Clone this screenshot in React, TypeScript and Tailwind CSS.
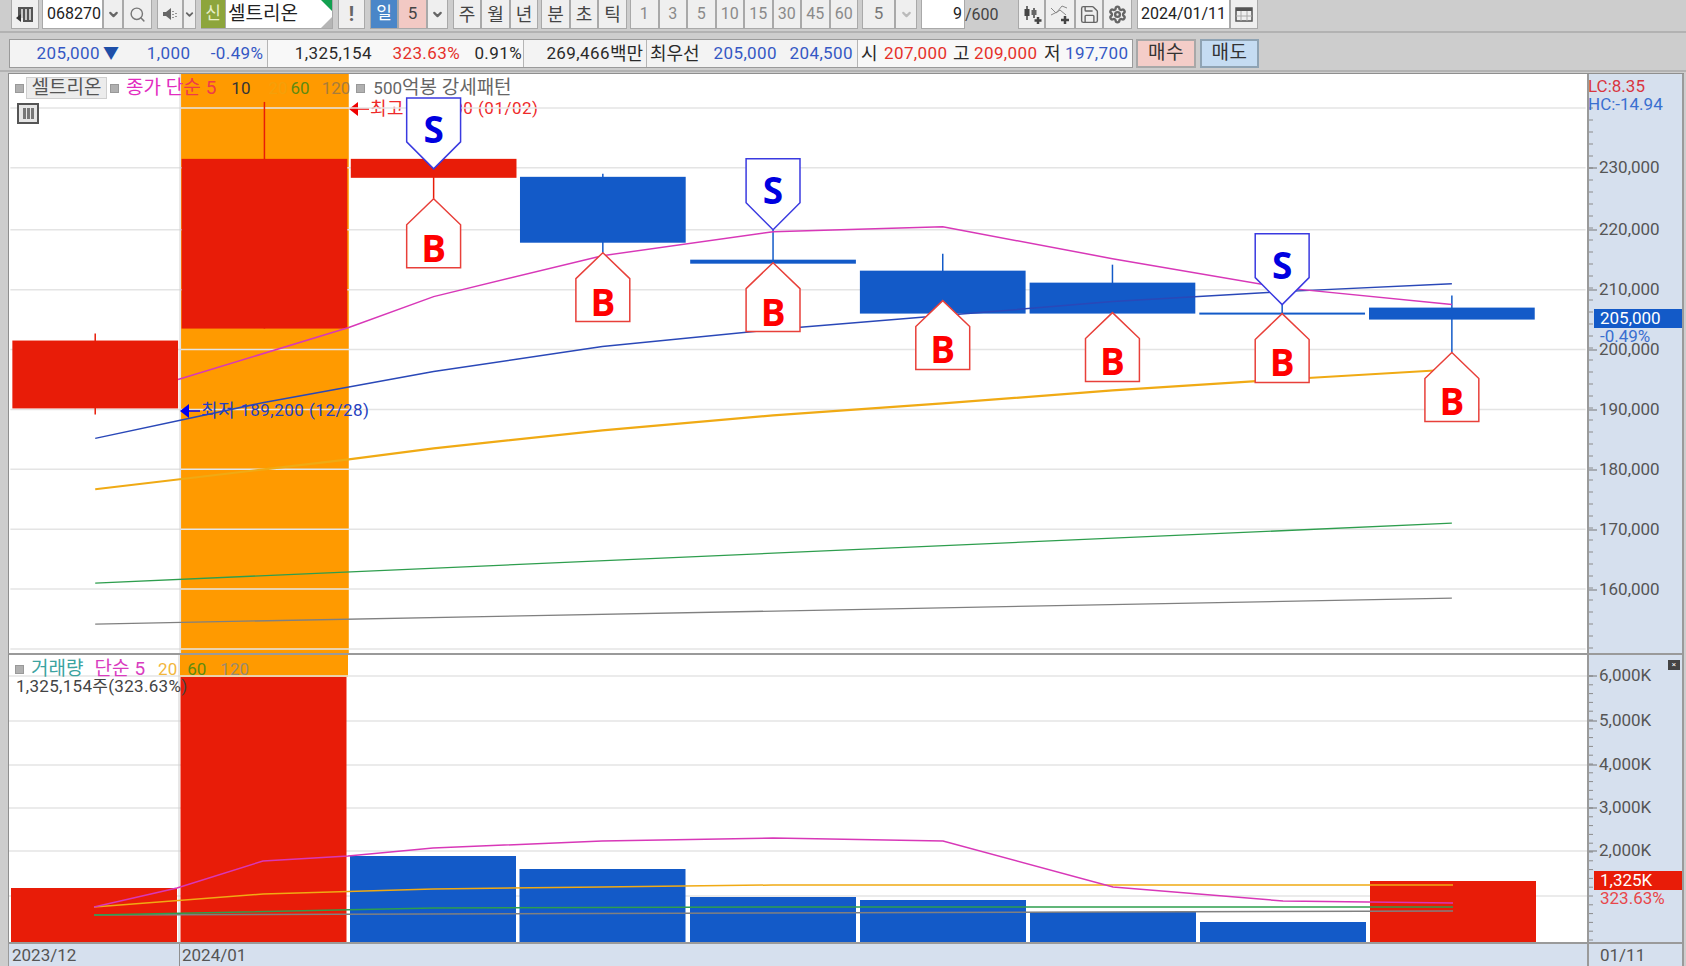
// Stock chart window: toolbar rows, price pane, volume pane
import React from 'react';
import { Search, Settings, Save, ChevronDown } from 'lucide-react';

const fontCls = "font-['Roboto','Noto_Sans_CJK_KR',sans-serif]";

const centers = [94, 263.5, 433, 602.5, 773, 943, 1113, 1283, 1453];
const RED = '#e81c08';
const BLUE = '#135ac8';

const candles = [
  { c: 0, top: 341, bot: 409, hi: 334, lo: 415, color: RED },
  { c: 1, top: 159, bot: 329, hi: 102, lo: 329, color: RED },
  { c: 2, top: 159, bot: 178, hi: 159, lo: 199, color: RED },
  { c: 3, top: 177, bot: 243, hi: 174, lo: 253, color: BLUE },
  { c: 4, top: 260, bot: 264, hi: 230, lo: 264, color: BLUE },
  { c: 5, top: 271, bot: 314, hi: 254, lo: 301, color: BLUE },
  { c: 6, top: 283, bot: 314, hi: 265, lo: 314, color: BLUE },
  { c: 7, top: 313, bot: 315, hi: 305, lo: 315, color: BLUE },
  { c: 8, top: 308, bot: 320, hi: 296, lo: 353, color: BLUE },
];

const volumes = [
  { c: 0, top: 889, color: RED },
  { c: 1, top: 678, color: RED },
  { c: 2, top: 857, color: BLUE },
  { c: 3, top: 870, color: BLUE },
  { c: 4, top: 898, color: BLUE },
  { c: 5, top: 901, color: BLUE },
  { c: 6, top: 913, color: BLUE },
  { c: 7, top: 923, color: BLUE },
  { c: 8, top: 882, color: RED },
];

const sellMarks = [{ c: 2, top: 98 }, { c: 4, top: 159 }, { c: 7, top: 234 }];
const buyMarks = [
  { c: 2, tip: 199 },
  { c: 3, tip: 253 },
  { c: 4, tip: 263 },
  { c: 5, tip: 301 },
  { c: 6, tip: 313 },
  { c: 7, tip: 314 },
  { c: 8, tip: 353 },
];

const priceGrid = [
  { y: 108 },
  { y: 168, label: '230,000' },
  { y: 230, label: '220,000' },
  { y: 290, label: '210,000' },
  { y: 350, label: '200,000' },
  { y: 410, label: '190,000' },
  { y: 470, label: '180,000' },
  { y: 530, label: '170,000' },
  { y: 590, label: '160,000' },
  { y: 650 },
];

const volumeGrid = [
  { y: 677, label: '6,000K' },
  { y: 722, label: '5,000K' },
  { y: 766, label: '4,000K' },
  { y: 809, label: '3,000K' },
  { y: 852, label: '2,000K' },
  { y: 897 },
];

const Mark = ({ cls = '' }: { cls?: string }) => (
  <span className={`inline-block w-[9px] h-[9px] shrink-0 bg-[#b0b0b0] border border-[#d8d8d8] outline outline-1 outline-[#999] -outline-offset-1 ${cls}`} />
);

function Btn({ children, w, cls = '' }: { children?: React.ReactNode; w: string; cls?: string }) {
  return (
    <div className={`${w} h-[29px] flex items-center justify-center border border-t-0 border-[#a9a9a9] bg-[#efefef] text-[#444] text-[17px] ${cls}`}>
      {children}
    </div>
  );
}

function Caret() {
  return <ChevronDown size={13} strokeWidth={4} className="text-[#666]" />;
}

function Arrow({ color }: { color: string }) {
  return (
    <svg width="20" height="16" viewBox="0 0 20 16" className="shrink-0">
      <path d="M0 8L9 1v14z" fill={color} />
      <path d="M8 8h12" stroke={color} strokeWidth="1.5" />
    </svg>
  );
}

function TopBar() {
  const periods = ['1', '3', '5', '10', '15', '30', '45', '60'];
  return (
    <div className="h-[33px] flex items-start pl-[11px] border-b-2 border-[#b2b2b2]">
      <Btn w="w-[28px]">
        <svg width="20" height="20" viewBox="0 0 20 20">
          <path d="M3 3h15v15H8v-4H3z" fill="#555" />
          <path d="M7 5v11M11 5v11M15 5v11" stroke="#eee" strokeWidth="1.5" />
          <path d="M1 14l5-4v8z" fill="#333" />
        </svg>
      </Btn>
      <div className="w-[61px] h-[29px] ml-[3px] bg-white border border-t-0 border-[#a9a9a9] flex items-center pl-[4px] text-[16px] text-[#222]">068270</div>
      <Btn w="w-[20px]"><Caret /></Btn>
      <Btn w="w-[29px]"><Search size={17} className="text-[#777]" /></Btn>
      <Btn w="w-[26px]" cls="ml-[5px]">
        <svg width="18" height="18" viewBox="0 0 18 18">
          <path d="M2 7h3l5-4v12l-5-4H2z" fill="#666" />
          <path d="M12 6v1M12 9v1M12 12v1M15 8v1M15 11v1" stroke="#777" strokeWidth="1.5" />
        </svg>
      </Btn>
      <Btn w="w-[13px]"><ChevronDown size={11} strokeWidth={4} className="text-[#666]" /></Btn>
      <div className="w-[24px] h-[29px] ml-[5px] bg-[#8da53c] text-[#e9f0c8] text-[17px] flex items-center justify-center border-b border-[#a9a9a9]">신</div>
      <div className="relative w-[108px] h-[29px] bg-white border border-t-0 border-[#a9a9a9] flex items-center pl-[2px] text-[19px] text-[#222]">
        셀트리온
        <span className="absolute right-0 top-0 w-0 h-0 border-l-[11px] border-l-transparent border-t-[11px] border-t-[#12a050]" />
        <span className="absolute right-0 bottom-0 w-0 h-0 border-l-[11px] border-l-transparent border-b-[11px] border-b-[#b5b5b5]" />
      </div>
      <Btn w="w-[27px]" cls="ml-[5px] font-bold !text-[#666] !text-[20px]">!</Btn>
      <Btn w="w-[28px]" cls="ml-[5px] !bg-[#4a86c8] !text-white">일</Btn>
      <Btn w="w-[29px]" cls="!bg-[#f2c9c4]">5</Btn>
      <Btn w="w-[21px]"><Caret /></Btn>
      <Btn w="w-[28px]" cls="ml-[5px] !text-[18px]">주</Btn>
      <Btn w="w-[29px]" cls="!text-[18px]">월</Btn>
      <Btn w="w-[28px]" cls="!text-[18px]">년</Btn>
      <Btn w="w-[29px]" cls="ml-[3px] !text-[18px]">분</Btn>
      <Btn w="w-[28px]" cls="!text-[18px]">초</Btn>
      <Btn w="w-[29px]" cls="!text-[18px]">틱</Btn>
      <div className="flex ml-[3px]">
        {periods.map(p => (
          <Btn key={p} w="w-[28.5px]" cls="!text-[#8a8a8a] !text-[16px]">{p}</Btn>
        ))}
      </div>
      <Btn w="w-[33px]" cls="ml-[4px] !text-[#777]">5</Btn>
      <Btn w="w-[22px]"><ChevronDown size={13} strokeWidth={4} className="text-[#bbb]" /></Btn>
      <div className="w-[44px] h-[29px] ml-[4px] bg-white border border-t-0 border-[#a9a9a9] flex items-center justify-end pr-[2px] text-[16px] text-[#222]">9</div>
      <div className="w-[53px] h-[29px] flex items-center text-[16px] text-[#444]">/600</div>
      <Btn w="w-[27px]">
        <svg width="22" height="22" viewBox="0 0 22 22">
          <path d="M6 3v14M13 5v10" stroke="#444" strokeWidth="1.5" />
          <rect x="3.5" y="6" width="5" height="7" fill="#444" />
          <rect x="10.5" y="7" width="5" height="5" fill="#666" />
          <path d="M17 14v7M13.5 17.5h7" stroke="#444" strokeWidth="2.5" />
        </svg>
      </Btn>
      <Btn w="w-[30px]">
        <svg width="22" height="22" viewBox="0 0 22 22">
          <path d="M2 5l5 5 4-3 6 5M2 12l6-3 5-6 5 2" stroke="#888" strokeWidth="1" fill="none" />
          <path d="M16 13v8M12 17h8" stroke="#444" strokeWidth="2.5" />
        </svg>
      </Btn>
      <Btn w="w-[28px]"><Save size={21} strokeWidth={1.6} className="text-[#666]" /></Btn>
      <Btn w="w-[29px]"><Settings size={19} strokeWidth={3} className="text-[#666]" /></Btn>
      <div className="w-[93px] h-[29px] ml-[5px] bg-white border border-t-0 border-[#a9a9a9] flex items-center justify-center text-[16px] text-[#222]">2024/01/11</div>
      <Btn w="w-[28px]">
        <svg width="18" height="16" viewBox="0 0 18 16">
          <rect x="1" y="2" width="16" height="13" fill="none" stroke="#555" strokeWidth="1.5" />
          <rect x="1" y="2" width="16" height="3" fill="#555" />
          <path d="M6 5v10M12 5v10M1 10h16" stroke="#aaa" strokeWidth="1" />
        </svg>
      </Btn>
    </div>
  );
}

function InfoBar() {
  const blue = 'text-[#3558c4]';
  const red = 'text-[#e5302a]';
  return (
    <div className="h-[39px] pt-[6px] flex items-start border-b-2 border-[#b2b2b2] text-[17px] tracking-[0.4px] text-[#2a2a2a] whitespace-nowrap">
      <div className="ml-[9px] w-[1124px] h-[29px] flex border border-[#9a9a9a] bg-[#f3f3f3]">
        <div className="w-[258px] flex items-center border-r border-[#b5b5b5]">
          <span className={`w-[90px] text-right ${blue}`}>205,000</span>
          <span className="ml-[3px] text-[#1e4fa8] text-[16px]">▼</span>
          <span className={`w-[71px] text-right ${blue}`}>1,000</span>
          <span className={`w-[73px] text-right ${blue}`}>-0.49%</span>
        </div>
        <div className="w-[256px] flex items-center border-r border-[#b5b5b5] bg-[#f8f8f8]">
          <span className="w-[104px] text-right">1,325,154</span>
          <span className={`w-[88px] text-right ${red}`}>323.63%</span>
          <span className="w-[62px] text-right">0.91%</span>
        </div>
        <div className="w-[123px] flex items-center justify-end pr-[3px] border-r border-[#b5b5b5]">269,466<span className="text-[18px] tracking-normal">백만</span></div>
        <div className="w-[211px] flex items-center border-r border-[#b5b5b5]">
          <span className="ml-[3px] w-[54px] text-[18px] tracking-normal">최우선</span>
          <span className={`w-[73px] text-right ${blue}`}>205,000</span>
          <span className={`w-[76px] text-right ${blue}`}>204,500</span>
        </div>
        <div className="flex-1 flex items-center bg-[#f8f8f8] pl-[3px]">
          <span className="w-[23px] text-[18px]">시</span>
          <span className={`w-[66px] ${red}`}>207,000</span>
          <span className="w-[24px] pl-[3px] text-[18px]">고</span>
          <span className={`w-[67px] ${red}`}>209,000</span>
          <span className="w-[24px] pl-[3px] text-[18px]">저</span>
          <span className={blue}>197,700</span>
        </div>
      </div>
      <div className="ml-[3px] w-[60px] h-[29px] flex items-center justify-center bg-[#f4cdc8] border-2 border-[#a8a8a8] text-[#333] text-[19px]">매수</div>
      <div className="ml-[4px] w-[59px] h-[29px] flex items-center justify-center bg-[#c5dcf2] border-2 border-[#8fa3b3] text-[#333] text-[19px]">매도</div>
    </div>
  );
}

function polyline(points: [number, number][]) {
  return points.map(p => p.join(',')).join(' ');
}

const x = centers;

function PricePlot() {
  return (
    <svg className="relative block w-full h-full" viewBox="9 74 1578 580">
      <rect x="180" y="74" width="168" height="580" fill="#ff9a00" />
      {priceGrid.map(g => (
        <line key={g.y} x1="9" x2="1587" y1={g.y} y2={g.y} stroke="#e4e4e4" strokeWidth="1.5" />
      ))}
      <line x1="179" x2="179" y1="74" y2="654" stroke="#cfcfcf" />
      {candles.map(k => (
        <g key={k.c}>
          <line x1={x[k.c]} x2={x[k.c]} y1={k.hi} y2={k.lo} stroke={k.color} strokeWidth="1.5" />
          <rect x={x[k.c] - 83} y={k.top} width="166" height={k.bot - k.top} fill={k.color} />
        </g>
      ))}
      <polyline points={polyline([[94, 625], [1453, 599]])} fill="none" stroke="#808080" strokeWidth="1.3" />
      <polyline points={polyline([[94, 584], [1453, 524]])} fill="none" stroke="#2e9e4e" strokeWidth="1.3" />
      <polyline points={polyline([[94, 490], [263, 470], [348, 460], [433, 449], [602, 431], [773, 416], [943, 404], [1113, 391], [1283, 380], [1453, 370]])} fill="none" stroke="#f0aa14" strokeWidth="2.2" />
      <polyline points={polyline([[94, 439], [263, 403], [433, 372], [602, 347], [773, 330], [943, 316], [1113, 302], [1283, 292], [1453, 284]])} fill="none" stroke="#2a48b8" strokeWidth="1.5" />
      <polyline points={polyline([[177, 380], [348, 328], [433, 297], [602, 256], [773, 232], [943, 227], [1113, 259], [1283, 288], [1453, 305]])} fill="none" stroke="#d838b8" strokeWidth="1.5" />
      {sellMarks.map(m => {
        const cx = x[m.c];
        return (
          <g key={m.c}>
            <polygon
              points={polyline([[cx - 27, m.top], [cx + 27, m.top], [cx + 27, m.top + 44], [cx, m.top + 71], [cx - 27, m.top + 44]])}
              fill="#fff"
              stroke="#3a3ae0"
              strokeWidth="1.5"
            />
            <text x={cx} y={m.top + 45} textAnchor="middle" className="font-['Open_Sans',sans-serif] font-bold text-[37px]" fill="#0000e0">S</text>
          </g>
        );
      })}
      {buyMarks.map(m => {
        const cx = x[m.c];
        return (
          <g key={m.c}>
            <polygon
              points={polyline([[cx, m.tip], [cx + 27, m.tip + 26], [cx + 27, m.tip + 69], [cx - 27, m.tip + 69], [cx - 27, m.tip + 26]])}
              fill="#fff"
              stroke="#e8403a"
              strokeWidth="1.5"
            />
            <text x={cx} y={m.tip + 63} textAnchor="middle" className="font-['Open_Sans',sans-serif] font-bold text-[37px]" fill="#ff0000">B</text>
          </g>
        );
      })}
    </svg>
  );
}

function VolumePlot() {
  return (
    <svg className="block w-full h-full" viewBox="9 656 1578 287">
      <rect x="180" y="654" width="168" height="24" fill="#ff9a00" />
      {volumeGrid.map(g => (
        <line key={g.y} x1="9" x2="1587" y1={g.y} y2={g.y} stroke="#e4e4e4" strokeWidth="1.5" />
      ))}
      <line x1="179" x2="179" y1="654" y2="943" stroke="#cfcfcf" />
      {volumes.map(v => (
        <rect key={v.c} x={x[v.c] - 83} y={v.top} width="166" height={943 - v.top} fill={v.color} />
      ))}
      <polyline points={polyline([[94, 916], [1453, 912]])} fill="none" stroke="#808080" strokeWidth="1.5" />
      <polyline points={polyline([[94, 916], [433, 909], [773, 908], [1453, 908]])} fill="none" stroke="#2e9e4e" strokeWidth="1.5" />
      <polyline points={polyline([[94, 908], [263, 895], [433, 890], [602, 888], [773, 886], [1453, 886]])} fill="none" stroke="#f0aa14" strokeWidth="1.5" />
      <polyline points={polyline([[94, 908], [177, 889], [263, 862], [348, 857], [433, 849], [602, 842], [773, 839], [943, 842], [1113, 888], [1283, 902], [1453, 904]])} fill="none" stroke="#d838b8" strokeWidth="1.5" />
    </svg>
  );
}

function Axis({ top, height, grid, step, first }: { top: number; height: number; grid: { y: number; label?: string }[]; step: number; first: number }) {
  const ticks: number[] = [];
  for (let y = first; y < top + height; y += step) ticks.push(y);
  return (
    <svg className="absolute inset-0 w-full h-full" viewBox={`1588 ${top} 93 ${height}`}>
      {ticks.map(y => (
        <line key={y} x1="1588" x2="1592" y1={y} y2={y} stroke="#8c8c8c" />
      ))}
      {grid.filter(g => g.label).map(g => (
        <g key={g.y}>
          <line x1="1588" x2="1596" y1={g.y} y2={g.y} stroke="#777" />
          <text x="1598" y={g.y + 5} className="text-[17px]" fill="#555">{g.label}</text>
        </g>
      ))}
    </svg>
  );
}

export default function App() {
  return (
    <div className={`w-[1686px] h-[966px] overflow-hidden flex flex-col bg-[#cdcdcd] ${fontCls}`}>
      <TopBar />
      <InfoBar />

      <div className="ml-[8px] mr-[2px] flex-1 flex flex-col border-t border-[#8f8f8f] min-h-0 mt-[1px]">
        {/* Price pane */}
        <div className="h-[579px] flex border-l border-[#8f8f8f]">
          <div className="relative flex-1 bg-white overflow-hidden">
            <div className="absolute left-[340px] top-[21px] flex items-center text-[17px] text-[#ee2a2a] whitespace-nowrap tracking-[0.5px]">
              <Arrow color="#f00000" />
              <span className="ml-[1px] text-[18px]">최고</span>
              <span className="ml-[5px]">241,000 (01/02)</span>
            </div>
            <PricePlot />
            <div className="absolute left-[6px] top-[0px] flex items-center text-[17px] whitespace-nowrap">
              <Mark />
              <span className="ml-[2px] w-[81px] h-[22px] flex items-center justify-center bg-[#ececec] border border-[#cfcfcf] text-[#555] text-[19px]">셀트리온</span>
              <Mark cls="ml-[3px]" />
              <span className="ml-[7px] text-[#e22cc0] text-[19px]">종가 단</span>
              <span className="text-[#ee3a4a] text-[19px]">순</span>
              <span className="ml-[5px] text-[#ee3a4a] text-[19px]">5</span>
              <span className="ml-[15px] text-[#353535]">10</span>
              <span className="ml-[18px] text-[#f5a00a]">20</span>
              <span className="ml-[3px] text-[#5f8a10]">60</span>
              <span className="ml-[12px] text-[#a87c3c]">120</span>
              <Mark cls="ml-[6px]" />
              <span className="ml-[8px] text-[#666]">500</span>
              <span className="text-[#666] text-[19px]">억봉 강세패턴</span>
            </div>
            <div className="absolute left-[8px] top-[29px] w-[22px] h-[21px] bg-[#e6e6e6] border-2 border-[#555] flex gap-[1px] justify-center pt-[3px]">
              <span className="w-[3px] h-[11px] bg-[#777]" />
              <span className="w-[3px] h-[11px] bg-[#777]" />
              <span className="w-[3px] h-[11px] bg-[#777]" />
            </div>
            <div className="absolute left-[171px] top-[323px] flex items-center text-[17px] text-[#2540c0] whitespace-nowrap tracking-[0.5px]">
              <Arrow color="#0000f0" />
              <span className="ml-[1px] text-[18px]">최저</span>
              <span className="ml-[5px]">189,200 (12/28)</span>
            </div>
          </div>
          <div className="relative w-[97px] bg-[#d6e0ee] border-x-2 border-[#9a9a9a] overflow-hidden">
            <Axis top={74} height={579} grid={priceGrid} step={12} first={108} />
            <div className="absolute left-[-1px] top-[3px] text-[#d9363e] text-[17px] leading-[18px]">LC:8.35</div>
            <div className="absolute left-[-1px] top-[21px] text-[#3a6fd0] text-[17px] leading-[18px]">HC:-14.94</div>
            <div className="absolute left-[5px] top-[235px] w-[88px] h-[19px] bg-[#135ac8] text-white text-[17px] leading-[19px] pl-[6px]">205,000</div>
            <div className="absolute left-[5px] top-[254px] w-[88px] h-[15px] bg-[#d6e0ee] text-[#3a6fd0] text-[17px] leading-[17px] pl-[6px]">-0.49%</div>
          </div>
        </div>

        {/* Volume pane */}
        <div className="h-[289px] flex border-l border-[#8f8f8f] border-t-2 border-t-[#9a9a9a]">
          <div className="relative flex-1 bg-white overflow-hidden">
            <VolumePlot />
            <div className="absolute left-[6px] top-[0px] flex items-center text-[17px] whitespace-nowrap">
              <Mark />
              <span className="ml-[7px] text-[#3ba3a0] text-[19px]">거래량</span>
              <span className="ml-[11px] text-[#d93cc0] text-[19px]">단순</span>
              <span className="ml-[5px] text-[#d93cc0] text-[19px]">5</span>
              <span className="ml-[13px] text-[#f2b63c]">20</span>
              <span className="ml-[10px] text-[#5f8a10]">60</span>
              <span className="ml-[14px] text-[#9a8a70]">120</span>
            </div>
            <div className="absolute left-[7px] top-[19px] text-[17px] text-[#444] whitespace-nowrap tracking-[0.3px]">1,325,154주(323.63%)</div>
          </div>
          <div className="relative w-[97px] bg-[#d6e0ee] border-x-2 border-[#9a9a9a] overflow-hidden">
            <Axis top={656} height={287} grid={volumeGrid} step={8.8} first={677} />
            <div className="absolute right-[2px] top-[5px] w-[12px] h-[10px] bg-[#444] flex items-center justify-center text-white text-[8px] leading-none">×</div>
            <div className="absolute left-[5px] top-[216px] w-[88px] h-[19px] bg-[#e81c08] text-white text-[17px] leading-[19px] pl-[6px]">1,325K</div>
            <div className="absolute left-[11px] top-[235px] text-[#e8474a] text-[17px] leading-[16px]">323.63%</div>
          </div>
        </div>

        {/* Date axis */}
        <div className="flex-1 flex border-l border-t-2 border-[#9a9a9a] bg-[#d6e0ee] text-[17px] text-[#555] leading-[23px]">
          <div className="flex-1 flex">
            <span className="w-[171px] pl-[3px] border-r border-[#8f8f8f]">2023/12</span>
            <span className="pl-[2px]">2024/01</span>
          </div>
          <div className="w-[97px] border-x-2 border-[#9a9a9a] pl-[11px]">01/11</div>
        </div>
      </div>
    </div>
  );
}
